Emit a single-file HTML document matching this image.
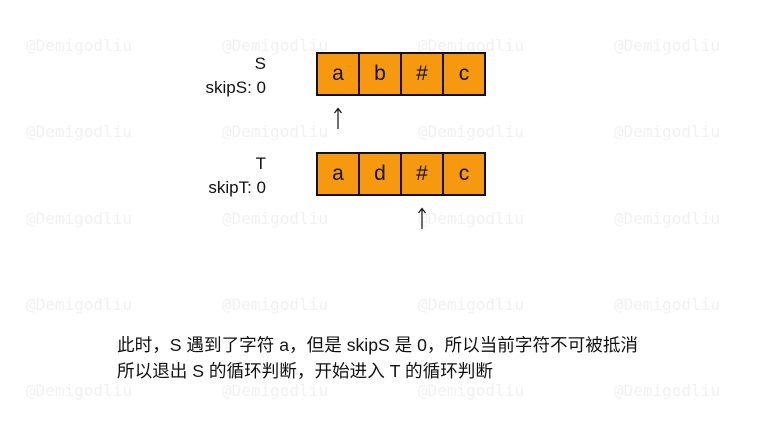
<!DOCTYPE html>
<html><head><meta charset="utf-8"><style>
body{margin:0;width:760px;height:440px;background:#fff;position:relative;overflow:hidden;font-family:"Liberation Sans","Noto Sans CJK SC",sans-serif;color:#111}
.wm{position:absolute;font-family:"DejaVu Sans Mono","Liberation Mono",monospace;font-size:16px;color:#f1f1f1;white-space:nowrap}
.row{position:absolute;left:316px;width:170px;height:44px;box-sizing:border-box;border:2px solid #111;background:#f7990f;display:flex}
.row div{flex:1;border-right:2px solid #111;text-align:center;line-height:40px;font-size:21px}
.row div:last-child{border-right:none}
.lbl{position:absolute;right:494px;text-align:right;font-size:17px;line-height:22px}
.txt{position:absolute;left:117px;font-size:17.6px;white-space:nowrap}
svg{position:absolute}
</style></head><body>
<div class="wm" style="left:26px;top:36px">@Demigodliu</div>
<div class="wm" style="left:222px;top:36px">@Demigodliu</div>
<div class="wm" style="left:418px;top:36px">@Demigodliu</div>
<div class="wm" style="left:614px;top:36px">@Demigodliu</div>
<div class="wm" style="left:26px;top:122px">@Demigodliu</div>
<div class="wm" style="left:222px;top:122px">@Demigodliu</div>
<div class="wm" style="left:418px;top:122px">@Demigodliu</div>
<div class="wm" style="left:614px;top:122px">@Demigodliu</div>
<div class="wm" style="left:26px;top:209px">@Demigodliu</div>
<div class="wm" style="left:222px;top:209px">@Demigodliu</div>
<div class="wm" style="left:418px;top:209px">@Demigodliu</div>
<div class="wm" style="left:614px;top:209px">@Demigodliu</div>
<div class="wm" style="left:26px;top:295px">@Demigodliu</div>
<div class="wm" style="left:222px;top:295px">@Demigodliu</div>
<div class="wm" style="left:418px;top:295px">@Demigodliu</div>
<div class="wm" style="left:614px;top:295px">@Demigodliu</div>
<div class="wm" style="left:26px;top:381px">@Demigodliu</div>
<div class="wm" style="left:222px;top:381px">@Demigodliu</div>
<div class="wm" style="left:418px;top:381px">@Demigodliu</div>
<div class="wm" style="left:614px;top:381px">@Demigodliu</div>

<div class="lbl" style="top:53px">S</div>
<div class="lbl" style="top:77px">skipS: 0</div>
<div class="row" style="top:52px"><div>a</div><div>b</div><div>#</div><div>c</div></div>
<svg style="left:332px;top:106px" width="12" height="24"><path d="M6 3V23M2.5 7L6 2.5L9.5 7" stroke="#111" stroke-width="1.2" fill="none"/></svg>

<div class="lbl" style="top:153px">T</div>
<div class="lbl" style="top:177px">skipT: 0</div>
<div class="row" style="top:152px"><div>a</div><div>d</div><div>#</div><div>c</div></div>
<svg style="left:416px;top:206px" width="12" height="24"><path d="M6 3V23M2.5 7L6 2.5L9.5 7" stroke="#111" stroke-width="1.2" fill="none"/></svg>

<div class="txt" style="top:332px">此时，S 遇到了字符 a，但是 skipS 是 0，所以当前字符不可被抵消</div>
<div class="txt" style="top:358px">所以退出 S 的循环判断，开始进入 T 的循环判断</div>
</body></html>
